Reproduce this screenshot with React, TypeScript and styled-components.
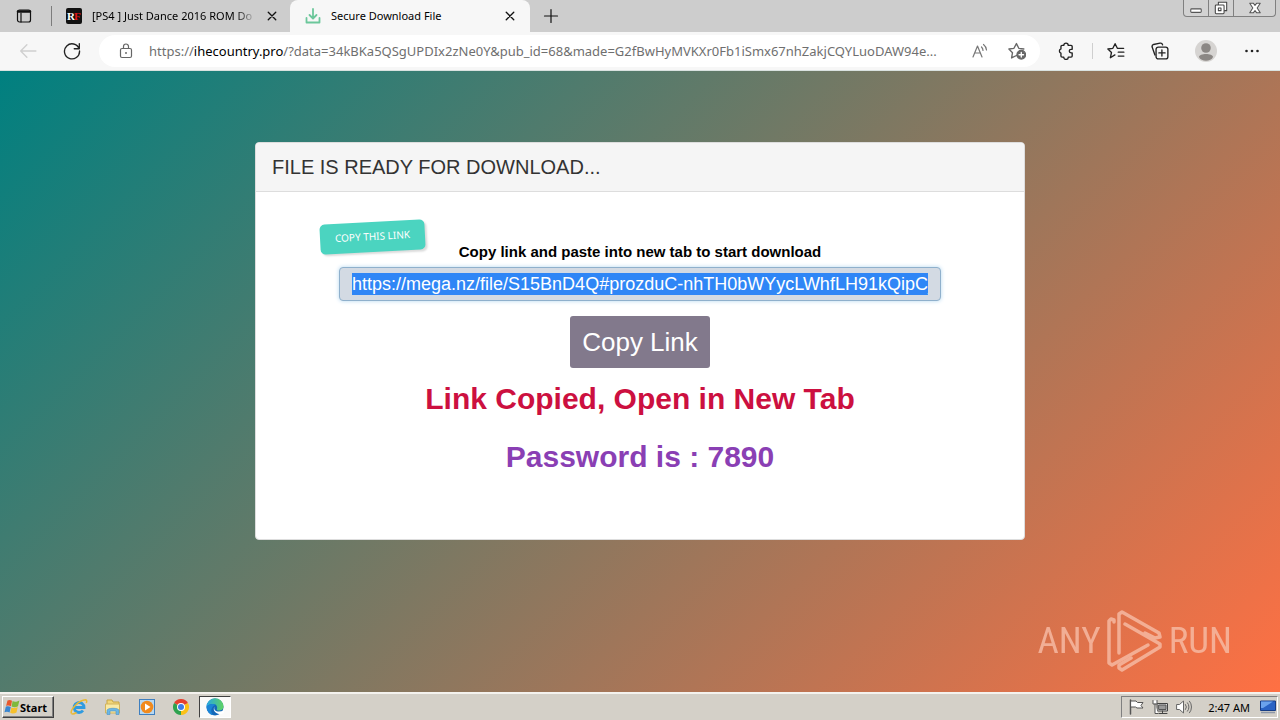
import React from "react";
import styled, { createGlobalStyle, css } from "styled-components";

const ui = `"Noto Sans", "Open Sans", sans-serif`;
const arial = `"Liberation Sans", Arial, sans-serif`;

const GlobalStyle = createGlobalStyle`
  *, *::before, *::after { box-sizing: border-box; }
  body { margin: 0; font-family: ${arial}; color: #000; }
  button { font: inherit; color: inherit; border: 0; background: none; padding: 0; margin: 0; }
  h1, h2, p { margin: 0; }
  svg { display: block; flex: none; }
`;

const Screen = styled.div`
  display: flex;
  flex-direction: column;
  min-height: 100vh;
`;

const TabStrip = styled.header`
  display: flex;
  height: 32px;
  background: #cdcdcd;
  font-family: ${ui};
  font-size: 11px;
`;

const IconButton = styled.button<{ $width: number }>`
  display: flex;
  align-items: center;
  justify-content: center;
  flex: none;
  width: ${(p) => p.$width}px;
  height: 100%;
`;

const StripDivider = styled.span`
  width: 1px;
  height: 20px;
  margin: 6px 3px 0;
  background: #7c7c7c;
`;

const Tab = styled.div<{ $active?: boolean }>`
  display: flex;
  align-items: center;
  gap: 10px;
  flex: 0 1 240px;
  min-width: 0;
  padding: 0 14px 0 15px;
  ${(p) =>
    p.$active
      ? css`
          background: #f7f7f7;
          border-radius: 8px 8px 0 0;
        `
      : css`
          flex-basis: 235px;
          padding: 0 12px 0 11px;
        `}
`;

const TabTitle = styled.span<{ $fade?: boolean }>`
  flex: 1;
  min-width: 0;
  overflow: hidden;
  white-space: nowrap;
  line-height: 20px;
  ${(p) => p.$fade && css`mask-image: linear-gradient(90deg, #000 88%, transparent);`}
`;

const WindowControls = styled.div`
  display: flex;
  height: 17px;
  margin: 0 4px 0 auto;
  border: 1px solid #808080;
  border-top: 0;
  border-radius: 0 0 4px 4px;
  background: #d2d2d2;

  button + button { border-left: 1px solid #808080; }
`;

const Toolbar = styled.div`
  display: flex;
  align-items: center;
  height: 39px;
  padding-right: 5px;
  background: #f7f7f7;
  border-bottom: 1px solid #d9e2e0;
`;

const AddressBar = styled.div`
  display: flex;
  align-items: center;
  flex: 1;
  min-width: 0;
  height: 32px;
  margin-left: 11px;
  padding: 0 4px 0 9px;
  border-radius: 16px;
  background: #fff;
`;

const Address = styled.div`
  flex: 1;
  min-width: 0;
  margin-left: 5px;
  overflow: hidden;
  white-space: nowrap;
  text-overflow: ellipsis;
  font-family: ${ui};
  font-size: 13px;
  line-height: 20px;
  color: #6f6f6f;

  b { font-weight: 400; color: #000; }
`;

const ToolDivider = styled.span`
  width: 1px;
  height: 16px;
  margin-right: 2px;
  background: #cfcfcf;
`;

const Page = styled.main`
  flex: 1;
  display: flex;
  flex-direction: column;
  align-items: center;
  justify-content: space-between;
  padding-top: 71px;
  background: linear-gradient(135deg, #008080, #ff7043);
`;

const Card = styled.section`
  width: 100%;
  max-width: 770px;
  overflow: hidden;
  border: 1px solid #ddd;
  border-radius: 4px;
  background: #fff;
`;

const CardHeader = styled.h1`
  padding: 10px 16px;
  border-bottom: 1px solid #ddd;
  background: #f5f5f5;
  color: #333;
  font-size: 20px;
  font-weight: 400;
  line-height: 28px;
`;

const CardBody = styled.div`
  position: relative;
  display: flex;
  flex-direction: column;
  align-items: center;
  padding: 50px 83px 63px;
`;

const Sticker = styled.span`
  position: absolute;
  top: 30px;
  left: 64px;
  padding: 7px 15px 9px;
  border-radius: 5px;
  background: #4bd4c0;
  box-shadow: 2px 2px 2px rgba(0, 0, 0, 0.14);
  color: #fff;
  font-family: ${ui};
  font-size: 10px;
  line-height: 14px;
  white-space: nowrap;
  transform: rotate(-3deg);
`;

const LinkLabel = styled.label`
  font-size: 15px;
  font-weight: 700;
  line-height: 20px;
`;

const LinkInput = styled.input`
  width: 100%;
  height: 34px;
  margin: 5px 0 15px;
  padding: 5px 12px;
  border: 1px solid #8fb0cc;
  border-radius: 4px;
  outline: 0;
  background: linear-gradient(#2f86f6, #2f86f6) content-box, #d3dae3;
  box-shadow: 0 0 4px #b4d8f0;
  color: #fff;
  font-family: ${arial};
  font-size: 18px;
`;

const CopyButton = styled.button`
  padding: 8px 12px;
  border-radius: 3px;
  background: #82798c;
  color: #fff;
  font-size: 26px;
  line-height: 36px;
`;

const Notice = styled.p<{ $color: string }>`
  margin-top: 12px;
  color: ${(p) => p.$color};
  font-size: 30px;
  font-weight: 700;
  line-height: 38px;

  & + & { margin-top: 20px; }
`;

const Watermark = styled.div`
  display: flex;
  align-items: center;
  align-self: flex-end;
  gap: 6px;
  margin: 0 48px 19px 0;
  color: #f6b9a2;
  font-family: "Roboto Condensed", "Liberation Sans Narrow", sans-serif;
  font-size: 37px;
  font-weight: 400;
  line-height: 64px;
  opacity: 0.85;
`;

const Taskbar = styled.footer`
  display: flex;
  align-items: center;
  height: 28px;
  padding: 0 2px;
  border-top: 2px solid #f4f2ee;
  background: #d4d0c8;
`;

const StartButton = styled.button`
  display: flex;
  align-items: center;
  width: 52px;
  height: 22px;
  margin-right: 8px;
  padding: 0 1px;
  border: 1px solid;
  border-color: #fff #404040 #404040 #fff;
  box-shadow: inset -1px -1px #808080;
  font-family: ${ui};
  font-size: 11px;
  font-weight: 700;
`;

const TaskButton = styled.button<{ $pressed?: boolean }>`
  display: flex;
  align-items: center;
  justify-content: center;
  width: 34px;
  height: 22px;
  ${(p) =>
    p.$pressed &&
    css`
      width: 32px;
      margin-left: 1px;
      border: 1px solid;
      border-color: #404040 #fff #fff #404040;
      background: #fbfaf9;
    `}
`;

const Tray = styled.div`
  display: flex;
  align-items: center;
  gap: 8px;
  height: 22px;
  margin-left: auto;
  padding: 0 1px 0 6px;
  border: 1px solid;
  border-color: #808080 #fff #fff #808080;
  font-family: ${ui};
  font-size: 11px;
`;

const Clock = styled.time`
  margin: 0 2px 0 8px;
  white-space: nowrap;
`;

const Line = ({ size = 16, color = "#222", width = 1.2, children }: { size?: number; color?: string; width?: number; children: React.ReactNode }) => (
  <svg width={size} height={size} viewBox="0 0 16 16" fill="none" stroke={color} strokeWidth={width} strokeLinecap="round" strokeLinejoin="round" aria-hidden="true">
    {children}
  </svg>
);

const CloseX = () => (
  <Line size={12} color="#111" width={1.8}><path d="M3 3l10 10M13 3L3 13" /></Line>
);

const Bars = () => (
  <Line color="#111"><rect x="1.5" y="2" width="13" height="12" rx="2" /><path d="M2 3.500h12" strokeWidth="2.400" /><path d="M5 5v9" /></Line>
);

const RomFavicon = () => (
  <svg width="16" height="16" viewBox="0 0 16 16" aria-hidden="true">
    <rect width="16" height="16" rx="2" fill="#111" />
    <text x="1" y="12" fontFamily="Liberation Serif, serif" fontSize="11" fontWeight="700" fill="#fff">R</text>
    <text x="8" y="12" fontFamily="Liberation Serif, serif" fontSize="11" fontWeight="700" fill="#e01818">F</text>
  </svg>
);

const AnyRunMark = () => (
  <svg width="56" height="64" viewBox="0 0 56 64" fill="none" stroke="currentColor" strokeWidth="3.500" strokeLinecap="round" strokeLinejoin="round" aria-hidden="true">
    <path d="M7 13V11L4 10L2 12V54L5 56L41 36" />
    <path d="M12 44V5L15 3L52 24L53 28L48 29L38 24" />
    <path d="M18 15L53 35V38L15 61L12 59V56L24 49" />
  </svg>
);

const WindowsFlag = () => (
  <svg width="16" height="16" viewBox="0 0 16 16" aria-hidden="true">
    <path d="M3.500 1.500C5 .5 6.500.8 8 1.700L7 7.300C5.500 6.400 4 6.200 2.100 7z" fill="#e8582c" />
    <path d="M8.600 2.100c1.700.9 3.800 1 6.800-.6l-1.400 5.700c-2 1.200-4.300 1.300-6.400.4z" fill="#7fb93c" />
    <path d="M1.800 7.700c1.700-.8 3.400-.6 5 .3l-1.200 5.400c-1.600-.9-3.300-1-5.100-.2z" fill="#3a86d0" />
    <path d="M7.400 8.400c2 .9 4.300.8 6.300-.4l-1.200 5.400c-2 1.200-4.500 1.300-6.300.4z" fill="#f6c02c" />
  </svg>
);

const ExplorerE = () => (
  <svg width="18" height="18" viewBox="0 0 18 18" fill="none" aria-hidden="true">
    <path d="M4.500 9.500h9.500a5 5 0 1 0-1 3" stroke="#2f9be0" strokeWidth="2.800" />
    <path d="M1.500 15.500C-.5 12 9 2 15.500 1.800c1.500.3 1.500 1.700.7 3.200" stroke="#e9b932" strokeWidth="1.500" />
    <path d="M1.500 15.500c1 1 3 .3 5-1" stroke="#e9b932" strokeWidth="1.500" />
  </svg>
);

const FolderIcon = () => (
  <svg width="18" height="18" viewBox="0 0 18 18" aria-hidden="true">
    <path d="M3 2h5l1 2h6v6H3z" fill="#f1d678" stroke="#c9a543" />
    <path d="M1.500 6h14v9h-14z" fill="#f9e9a4" stroke="#d2b35a" />
    <path d="M3 16.500v-4C3 9.500 15 9.500 15 12.500v4h-3V13H6v3.500z" fill="#6bb7e6" stroke="#4a92c4" strokeWidth=".6" />
  </svg>
);

const MediaIcon = () => (
  <svg width="18" height="18" viewBox="0 0 18 18" aria-hidden="true">
    <rect x="1.500" y="1.500" width="15" height="15" fill="#b7d8f2" stroke="#3f7fbf" />
    <circle cx="9" cy="9" r="6.300" fill="#f18a1d" />
    <path d="M7 5.500l5.500 3.500L7 12.500z" fill="#fff" />
  </svg>
);

const ChromeIcon = () => (
  <svg width="16" height="16" viewBox="0 0 16 16" aria-hidden="true">
    <path d="M8 8L1.070 4A8 8 0 0 1 14.930 4z" fill="#e5402f" />
    <path d="M8 8L14.930 4A8 8 0 0 1 8 16z" fill="#fbc116" />
    <path d="M8 8v8A8 8 0 0 1 1.070 4z" fill="#2ea24f" />
    <circle cx="8" cy="8" r="4" fill="#fff" /><circle cx="8" cy="8" r="3" fill="#3e7de8" />
  </svg>
);

const EdgeIcon = () => (
  <svg width="18" height="18" viewBox="0 0 18 18" aria-hidden="true">
    <defs>
      <linearGradient id="edge" x1="0" y1="0" x2="1" y2="0"><stop offset="0" stopColor="#27a6e4" /><stop offset="1" stopColor="#5fd35f" /></linearGradient>
    </defs>
    <circle cx="9" cy="9" r="8.500" fill="#1467b8" />
    <path d="M.5 9A8.500 8.500 0 0 1 17.500 8.500c0 3-2.500 4-4.500 4-1.800 0-2.600-.8-2-1.800C11.700 9 10.500 6 7.300 6 4 6 1 7.500.5 9z" fill="url(#edge)" />
    <path d="M7.300 6C4 6 1 7.500.5 9a8.500 8.500 0 0 0 7 8.300C4 14.500 4.500 9 9.500 6.700A5 5 0 0 0 7.300 6z" fill="#1b84d6" />
    <path d="M8.500 8.500c-1.500 4.500 3 6.500 9.500 4v2.500l-2.500 1c-5 .5-9.500-3-7-7.500z" fill="#fff" />
  </svg>
);

export default function App() {
  return (
    <Screen>
      <GlobalStyle />
      <TabStrip>
        <IconButton $width={48} aria-label="Tab actions"><Bars /></IconButton>
        <StripDivider />
        <Tab>
          <RomFavicon />
          <TabTitle $fade>[PS4 ] Just Dance 2016 ROM Do</TabTitle>
          <button aria-label="Close tab"><CloseX /></button>
        </Tab>
        <Tab $active>
          <Line color="#6cc79b" width={1.8}><path d="M8 1v9M4.500 7L8 10.500 11.500 7M1.500 10v4.500h13V10" /></Line>
          <TabTitle>Secure Download File</TabTitle>
          <button aria-label="Close tab"><CloseX /></button>
        </Tab>
        <IconButton $width={42} aria-label="New tab">
          <Line color="#111"><path d="M8 1.500v13M1.500 8h13" /></Line>
        </IconButton>
        <WindowControls>
          <IconButton $width={24} aria-label="Minimize">
            <Line size={14} color="#555"><rect x="2" y="9" width="12" height="4" rx="1" fill="#fff" /></Line>
          </IconButton>
          <IconButton $width={25} aria-label="Restore">
            <Line size={14} color="#444"><path d="M5 4V1.500h9.500V11H12" fill="#fff" /><rect x="1.500" y="4.500" width="10" height="10" rx="1" fill="#fff" /><rect x="5" y="8" width="3" height="3" /></Line>
          </IconButton>
          <IconButton $width={42} aria-label="Close">
            <Line size={14} color="#555"><path d="M2 2.500h4L8 5l2-2.500h4L10.500 8l3.500 5.500h-4L8 11l-2 2.500H2L5.500 8z" fill="#fff" /></Line>
          </IconButton>
        </WindowControls>
      </TabStrip>

      <Toolbar>
        <IconButton $width={56} aria-label="Back">
          <Line size={18} color="#cfcfcf"><path d="M15 8H1.500M7 2.500L1.500 8 7 13.500" /></Line>
        </IconButton>
        <IconButton $width={32} aria-label="Refresh">
          <Line size={18}><path d="M14.300 6A6.700 6.700 0 1 0 14.700 8M14.500 1.500V6H10" /></Line>
        </IconButton>
        <AddressBar>
          <IconButton $width={36} aria-label="Site information">
            <Line color="#666"><rect x="2.500" y="5.500" width="11" height="9" rx="1.500" /><path d="M5.500 5.500V3.500a2.500 2.500 0 0 1 5 0v2" /><circle cx="8" cy="10" r=".4" /></Line>
          </IconButton>
          <Address role="textbox" aria-label="Address">
            https://<b>ihecountry.pro</b>/?data=34kBKa5QSgUPDIx2zNe0Y&amp;pub_id=68&amp;made=G2fBwHyMVKXr0Fb1iSmx67nhZakjCQYLuoDAW94e...
          </Address>
          <IconButton $width={36} aria-label="Read aloud">
            <Line color="#777"><path d="M1 14L5.500 3 10 14M2.800 10h5.500M9.500 4a5 5 0 0 1 1.500 3.500M11.500 1.500A8 8 0 0 1 14.500 7" /></Line>
          </IconButton>
          <IconButton $width={38} aria-label="Add to favorites">
            <Line size={18} color="#666"><path d="M7.500 12L3.200 14.200 4 9.500.8 6.200l4.500-.6L7.500 1.400l2.100 4.200 4.500.6" /><circle cx="11.800" cy="11.300" r="3.800" fill="#666" /><path d="M11.800 9.300v4M9.800 11.300h4" stroke="#fff" /></Line>
          </IconButton>
        </AddressBar>
        <IconButton $width={52} aria-label="Extensions">
          <Line size={18}><path d="M4.500 3H6a2 2 0 0 1 4 0h2.500a1 1 0 0 1 1 1v2.500h-1a1.600 1.600 0 0 0 0 3.200h1v2.800a1 1 0 0 1-1 1H10a2 2 0 0 1-4 0H4.500a1 1 0 0 1-1-1V10a2 2 0 0 1 0-3.800V4a1 1 0 0 1 1-1z" /></Line>
        </IconButton>
        <ToolDivider />
        <IconButton $width={42} aria-label="Favorites">
          <Line size={18}><path d="M7 11.500L3 14l1-4.700L.8 6.200l4.400-.6L7.200 1.500l2 4.100h5.600M10 9h5M10 12.500h5" /></Line>
        </IconButton>
        <IconButton $width={46} aria-label="Collections">
          <Line size={18}><path d="M3.500 11.500L1 4.500a2 2 0 0 1 1.300-2.300L8 1a2 2 0 0 1 2.300 1.500" /><rect x="4.500" y="4.500" width="10.500" height="10.500" rx="2" /><path d="M9.700 7v5.500M7 9.700h5.500" /></Line>
        </IconButton>
        <IconButton $width={46} aria-label="Profile">
          <svg width="22" height="22" viewBox="0 0 22 22" aria-hidden="true">
            <circle cx="11" cy="11" r="11" fill="#d6d4d2" /><circle cx="11" cy="8" r="4.800" fill="#8b8784" /><path d="M4 17c0-4 14-4 14 0-2 5-12 5-14 0z" fill="#8b8784" />
          </svg>
        </IconButton>
        <IconButton $width={46} aria-label="Settings and more">
          <Line><g fill="#222" stroke="none"><circle cx="2.500" cy="8" r="1.300" /><circle cx="8" cy="8" r="1.300" /><circle cx="13.500" cy="8" r="1.300" /></g></Line>
        </IconButton>
      </Toolbar>

      <Page>
        <Card>
          <CardHeader>FILE IS READY FOR DOWNLOAD...</CardHeader>
          <CardBody>
            <Sticker>COPY THIS LINK</Sticker>
            <LinkLabel htmlFor="link">Copy link and paste into new tab to start download</LinkLabel>
            <LinkInput id="link" readOnly value="https://mega.nz/file/S15BnD4Q#prozduC-nhTH0bWYycLWhfLH91kQipC_" />
            <CopyButton>Copy Link</CopyButton>
            <Notice $color="#cc1040">Link Copied, Open in New Tab</Notice>
            <Notice $color="#8a3fb4">Password is : 7890</Notice>
          </CardBody>
        </Card>
        <Watermark><span>ANY</span><AnyRunMark /><span>RUN</span></Watermark>
      </Page>

      <Taskbar>
        <StartButton><WindowsFlag />Start</StartButton>
        <TaskButton aria-label="Internet Explorer"><ExplorerE /></TaskButton>
        <TaskButton aria-label="Windows Explorer"><FolderIcon /></TaskButton>
        <TaskButton aria-label="Media Player"><MediaIcon /></TaskButton>
        <TaskButton aria-label="Chrome"><ChromeIcon /></TaskButton>
        <TaskButton $pressed aria-label="Microsoft Edge"><EdgeIcon /></TaskButton>
        <Tray>
          <Line color="#555" width={1}><path d="M2.500 1v14" strokeWidth="1.500" /><path d="M3 2h5l1.500 1.500H15L13 6.500l2 2.500H9L7.500 8H3z" fill="#fff" /></Line>
          <Line color="#555" width={1}><rect x="5.500" y="4.500" width="10" height="7.500" fill="#ddd" stroke="#444" /><rect x="7" y="6" width="7" height="4.500" fill="#999" /><path d="M7 14.500h8M10.500 12v2.500" stroke="#444" /><path d="M1 1.500v3.500h4V1.500M3 5v9.500h3" fill="#fff" /></Line>
          <Line color="#666" width={1}><path d="M1 5.500h2.500L7.500 2v12L3.500 10.500H1z" fill="#fff" /><path d="M9.500 5.500a4 4 0 0 1 0 5M11.500 3.800a6.500 6.500 0 0 1 0 8.400M13.500 2.200a9 9 0 0 1 0 11.600" /></Line>
          <Clock>2:47 AM</Clock>
          <svg width="16" height="14" viewBox="0 0 16 14" aria-hidden="true">
            <path d="M.5 1h15v9.500H.5z" fill="#2a63c4" stroke="#173d85" /><path d="M1 1.500h12L3 8H1z" fill="#6ba3ec" /><path d="M1 12.500h14" stroke="#8f98a8" strokeWidth="1.500" />
          </svg>
        </Tray>
      </Taskbar>
    </Screen>
  );
}
